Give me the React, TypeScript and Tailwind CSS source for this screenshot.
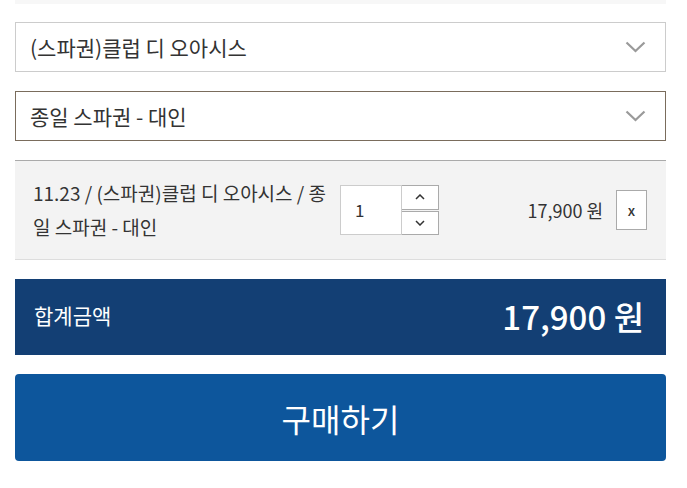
import React from 'react';

const font = { fontFamily: '"Noto Sans CJK KR", "Noto Sans", sans-serif' };

function Chevron() {
  return (
    <svg width="21" height="12" viewBox="0 0 21 12" fill="none" className="shrink-0">
      <path d="M1.5 1.5 L10.5 10 L19.5 1.5" stroke="#9a9a9a" strokeWidth="2.2" />
    </svg>
  );
}

function Select({ label, active = false }: { label: string; active?: boolean }) {
  return (
    <div
      className={`h-[50px] flex items-center justify-between pl-[14px] pr-[19px] bg-white border ${
        active ? 'border-[#7a6c5c]' : 'border-[#cccccc]'
      }`}
    >
      <span className="text-[21px] text-[#333333] leading-none">{label}</span>
      <Chevron />
    </div>
  );
}

export default function App() {
  return (
    <div className="w-[687px] h-[488px] bg-white pl-[15px] pr-[21px]" style={font}>
      <div className="h-[4px] bg-[#f7f7f7]" />

      <div className="mt-[18px] flex flex-col gap-[19px]">
        <Select label="(스파권)클럽 디 오아시스" />
        <Select label="종일 스파권 - 대인" active />
      </div>

      {/* selected item */}
      <div className="mt-[19px] h-[100px] bg-[#f3f3f3] border-t border-t-[#aaaaaa] border-b border-b-[#dddddd] flex items-center pl-[18px] pr-[19px]">
        <p className="w-[300px] text-[19px] leading-[34px] text-[#333333] break-all">
          11.23 / (스파권)클럽 디 오아시스 / 종일 스파권 - 대인
        </p>
        <div className="ml-[7px] flex h-[50px]">
          <div className="w-[62px] bg-white border border-[#cccccc] flex items-center pl-[14px] text-[17px] text-[#333333]">
            1
          </div>
          <div className="w-[37px] flex flex-col gap-[1px]">
            <button className="flex-1 bg-white border border-[#aaaaaa] border-l-0 flex items-center justify-center">
              <svg width="10" height="6" viewBox="0 0 10 6" fill="none">
                <path d="M1 5 L5 1 L9 5" stroke="#333" strokeWidth="1.5" />
              </svg>
            </button>
            <button className="flex-1 bg-white border border-[#aaaaaa] border-l-0 flex items-center justify-center">
              <svg width="10" height="6" viewBox="0 0 10 6" fill="none">
                <path d="M1 1 L5 5 L9 1" stroke="#333" strokeWidth="1.5" />
              </svg>
            </button>
          </div>
        </div>
        <span className="flex-1 text-right text-[18px] text-[#333333] pr-[13px]">17,900 원</span>
        <button className="w-[31px] h-[40px] bg-white border border-[#aaaaaa] flex items-center justify-center text-[14px] font-medium text-[#333333] leading-none">
          x
        </button>
      </div>

      {/* total */}
      <div className="mt-[19px] h-[76px] bg-[#133f74] flex items-center justify-between pl-[19px] pr-[22px] text-white">
        <span className="text-[21px] -mt-[2px]">합계금액</span>
        <span className="text-[33px] font-medium">17,900 원</span>
      </div>

      <button className="mt-[19px] w-full h-[87px] bg-[#0d569c] rounded-[4px] text-white text-[32px] flex items-center justify-center">
        구매하기
      </button>
    </div>
  );
}
